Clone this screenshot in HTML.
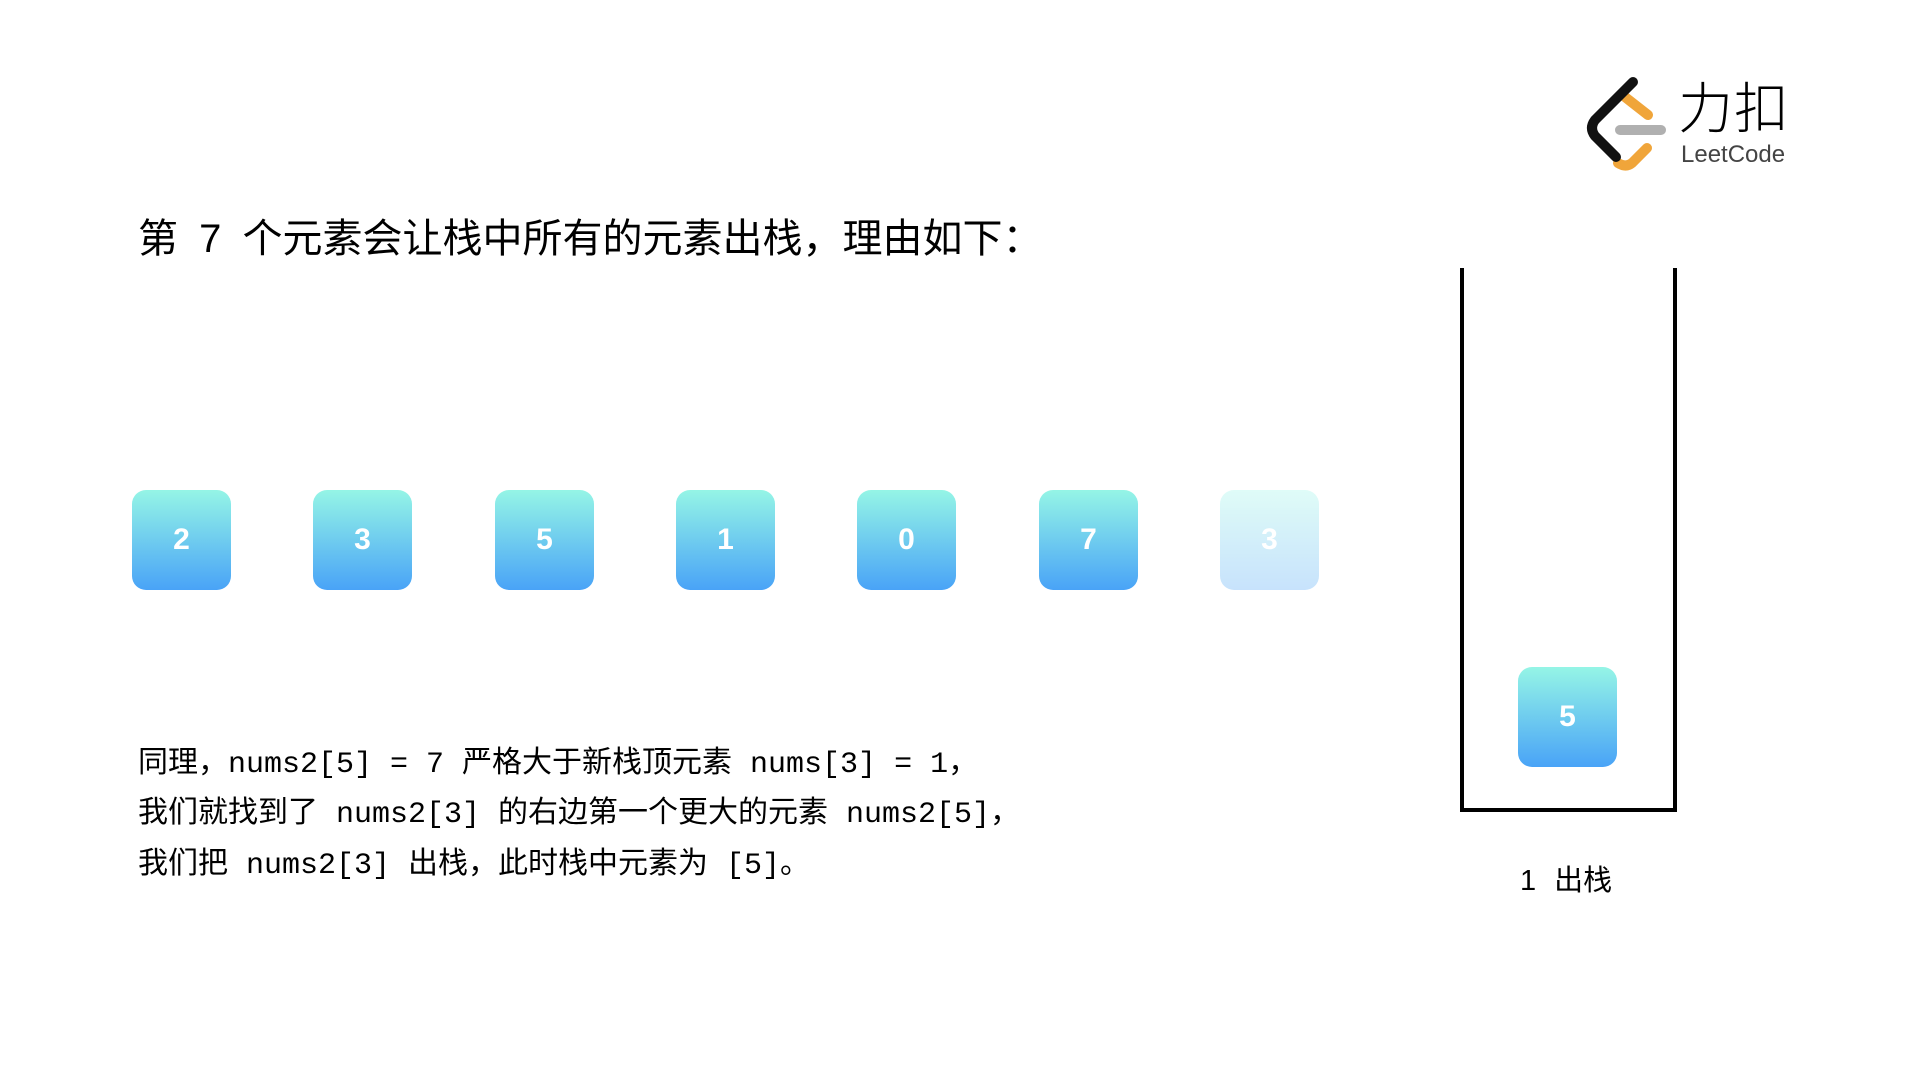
<!DOCTYPE html>
<html><head><meta charset="utf-8"><style>
body{margin:0;width:1920px;height:1080px;background:#fff;position:relative;overflow:hidden;font-family:"Liberation Sans","Noto Sans CJK SC",sans-serif;}
.t{position:absolute;white-space:nowrap;color:#000;}
.box{position:absolute;width:99px;height:100px;top:490px;border-radius:14px;background:linear-gradient(#95f5e6,#49a3f7);color:#fff;font:bold 30px "Liberation Sans",sans-serif;display:flex;align-items:center;justify-content:center;}
.p{position:absolute;left:138px;font-family:"Liberation Mono","Noto Sans CJK SC",monospace;font-size:30px;white-space:nowrap;color:#000;}
</style></head><body>
<svg style="position:absolute;left:0;top:0" width="1920" height="1080">
 <path d="M1625 97 L1648 115" stroke="#f0a53a" stroke-width="10" stroke-linecap="round" fill="none"/>
 <path d="M1647 148 L1632 163 Q1626 168 1618 163" stroke="#f0a53a" stroke-width="10" stroke-linecap="round" fill="none"/>
 <path d="M1633 82 L1595 120 Q1589 128 1595 136 L1616 157" stroke="#111" stroke-width="10" stroke-linecap="round" stroke-linejoin="round" fill="none"/>
 <line x1="1620" y1="130" x2="1661" y2="130" stroke="#b0b0b0" stroke-width="10" stroke-linecap="round"/>
 <line x1="1462" y1="268" x2="1462" y2="811" stroke="#000" stroke-width="4"/>
 <line x1="1675" y1="268" x2="1675" y2="811" stroke="#000" stroke-width="4"/>
 <line x1="1460" y1="810" x2="1677" y2="810" stroke="#000" stroke-width="4"/>
</svg>
<div class="t" style="left:1678px;top:64px;font-size:55px;font-family:'Noto Sans CJK SC',sans-serif;font-weight:300;letter-spacing:1px">力扣</div>
<div class="t" style="left:1681px;top:141px;font-size:24px;color:#444">LeetCode</div>
<div class="t" style="left:138px;top:206px;font-size:40px;word-spacing:10px">第 7 个元素会让栈中所有的元素出栈，理由如下：</div>
<div class="box" style="left:132px">2</div>
<div class="box" style="left:313px">3</div>
<div class="box" style="left:495px">5</div>
<div class="box" style="left:676px">1</div>
<div class="box" style="left:857px">0</div>
<div class="box" style="left:1039px">7</div>
<div class="box" style="left:1220px;opacity:0.3">3</div>
<div class="box" style="left:1518px;top:667px">5</div>
<div class="p" style="top:737px">同理，nums2[5] = 7 严格大于新栈顶元素 nums[3] = 1，</div>
<div class="p" style="top:787px">我们就找到了 nums2[3] 的右边第一个更大的元素 nums2[5]，</div>
<div class="p" style="top:838px">我们把 nums2[3] 出栈，此时栈中元素为 [5]。</div>
<div class="t" style="left:1520px;top:857px;font-size:29px;word-spacing:10px">1 出栈</div>
</body></html>
